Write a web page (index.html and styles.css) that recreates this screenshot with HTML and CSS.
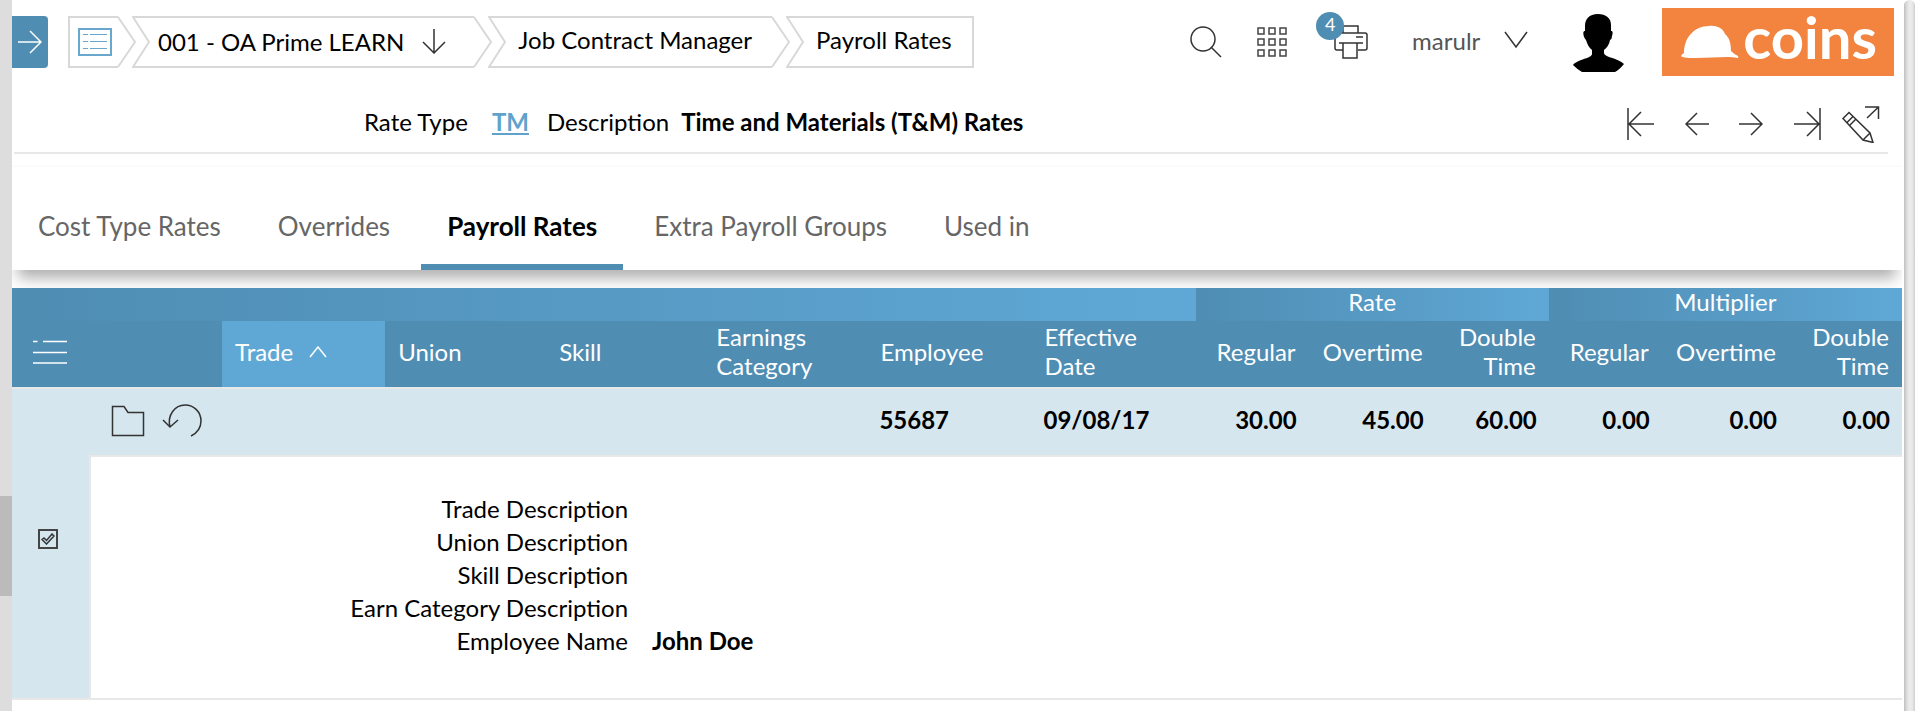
FILE: index.html
```html
<!DOCTYPE html>
<html lang="en">
<head>
<meta charset="utf-8">
<title>Payroll Rates</title>
<link rel="stylesheet" href="styles.css">
</head>
<body>
<div class="rail"><div class="rail-thumb"></div></div>
<div class="page">
  <header class="topbar">
    <button class="menu-toggle" aria-label="Open menu">
      <svg width="24" height="24" viewBox="0 0 24 24"><path d="M0 12H23M12 1L23 12L12 23"/></svg>
    </button>
    <nav aria-label="Breadcrumb">
      <ol class="crumbs">
        <li class="crumb">
          <a class="crumb-body crumb-first" href="#" aria-label="Menu list">
            <svg class="list-icon" width="34" height="28" viewBox="0 0 34 28"><path class="frame" d="M1 1H33V27H1Z"/><path d="M5 6.500H10M12 6.500H29M5 13.500H10M12 13.500H29M5 20.500H10M12 20.500H29"/></svg>
          </a>
          <svg class="edge" width="18" height="52" viewBox="0 0 18 52"><path d="M0 1L17 26L0 51"/></svg>
        </li>
        <li class="crumb">
          <svg class="edge" width="18" height="52" viewBox="0 0 18 52"><path d="M18 1H1L17 26L1 51H18"/></svg>
          <button class="crumb-body crumb-company">001 - OA Prime LEARN
            <svg class="line-icon" width="24" height="26" viewBox="0 0 24 26"><path d="M12 1V25M1 14L12 25L23 14"/></svg>
          </button>
          <svg class="edge" width="18" height="52" viewBox="0 0 18 52"><path d="M0 1L17 26L0 51"/></svg>
        </li>
        <li class="crumb">
          <svg class="edge" width="18" height="52" viewBox="0 0 18 52"><path d="M18 1H1L17 26L1 51H18"/></svg>
          <a class="crumb-body" href="#">Job Contract Manager</a>
          <svg class="edge" width="18" height="52" viewBox="0 0 18 52"><path d="M0 1L17 26L0 51"/></svg>
        </li>
        <li class="crumb">
          <svg class="edge" width="18" height="52" viewBox="0 0 18 52"><path d="M18 1H1L17 26L1 51H18"/></svg>
          <a class="crumb-body crumb-last" href="#">Payroll Rates</a>
        </li>
      </ol>
    </nav>
    <div class="tools">
      <button class="tool" aria-label="Search">
        <svg class="line-icon" width="32" height="32" viewBox="0 0 32 32"><circle cx="13" cy="13" r="12"/><path d="M21 21L31 31"/></svg>
      </button>
      <button class="tool" aria-label="Applications">
        <svg class="grid-icon" width="30" height="30" viewBox="0 0 30 30"><path d="M1 1h6v6h-6zM12 1h6v6h-6zM23 1h6v6h-6zM1 12h6v6h-6zM12 12h6v6h-6zM23 12h6v6h-6zM1 23h6v6h-6zM12 23h6v6h-6zM23 23h6v6h-6z"/></svg>
      </button>
      <button class="tool printer" aria-label="Print queue">
        <svg class="line-icon" width="34" height="34" viewBox="0 0 34 34"><path d="M9 8V1H24V8M9 25H3Q1 25 1 23V10Q1 8 3 8H31Q33 8 33 10V23Q33 25 31 25H24M5 18H29M9 18H23V33H9ZM22 12H29"/></svg>
        <span class="badge">4</span>
      </button>
      <button class="user">marulr
        <svg class="line-icon" width="24" height="18" viewBox="0 0 24 18"><path d="M1 1L12 16L23 1"/></svg>
      </button>
      <svg class="avatar" width="52" height="60" viewBox="0 0 52 60" role="img" aria-label="User picture"><path d="M26 1C17 1 13 6 13 13V18C11 18 11 20 12 24Q13 26 14 27Q16 34 20 37V41Q20 43 15 45C8 47 2 50 1 52Q6 57 10 59H43Q47 57 52 51C49 48 44 46 37 44Q32 42 32 40V37Q37 33 38 27Q40 26 40 23C41 20 41 18 39 18V12C39 5 34 1 26 1Z"/></svg>
      <a class="logo" href="#">
        <svg width="58" height="34" viewBox="0 0 58 34"><path d="M0 31Q1 29 3 28C3 13 13 1 28 1C37 0 42 4 44 9C49 13 50 20 50 26Q54 30 57 31Q58 33 56 33C48 31 31 33 14 33Q1 33 0 31Z"/></svg>
        <span>coins</span>
      </a>
    </div>
  </header>

  <section class="record">
    <dl class="record-fields">
      <dt>Rate Type</dt><dd><a href="#">TM</a></dd>
      <dt>Description</dt><dd>Time and Materials (T&amp;M) Rates</dd>
    </dl>
    <div class="record-nav">
      <button aria-label="First"><svg class="line-icon" width="28" height="32" viewBox="0 0 28 32"><path d="M1 0V32M27 16H2M14 4L2 16L14 28"/></svg></button>
      <button aria-label="Previous"><svg class="line-icon" width="24" height="32" viewBox="0 0 24 32"><path d="M24 16H1M12 5L1 16L12 27"/></svg></button>
      <button aria-label="Next"><svg class="line-icon" width="24" height="32" viewBox="0 0 24 32"><path d="M0 16H23M12 5L23 16L12 27"/></svg></button>
      <button aria-label="Last"><svg class="line-icon" width="28" height="32" viewBox="0 0 28 32"><path d="M27 0V32M1 16H26M14 4L26 16L14 28"/></svg></button>
      <button class="edit" aria-label="Edit"><svg class="line-icon" width="38" height="38" viewBox="0 0 38 38"><path d="M23 2H36.500V14M36.500 2L25 13M1 13.500L7 7.500L28 28L31 37.500L21 35ZM5 17.500L11 11.500M8 20L14 14M21 35L28 28"/></svg></button>
    </div>
  </section>

  <nav class="tabs" aria-label="Sections">
    <a class="tab" href="#">Cost Type Rates</a>
    <a class="tab" href="#">Overrides</a>
    <a class="tab active" href="#" aria-current="page">Payroll Rates</a>
    <a class="tab" href="#">Extra Payroll Groups</a>
    <a class="tab" href="#">Used in</a>
  </nav>

  <table class="rates">
    <colgroup>
      <col class="c-check"><col class="c-actions"><col class="c-trade"><col class="c-union"><col class="c-skill"><col class="c-text"><col class="c-text"><col class="c-text">
      <col class="c-num"><col class="c-wide"><col class="c-num"><col class="c-num"><col class="c-wide"><col class="c-num">
    </colgroup>
    <thead>
      <tr class="groups"><th colspan="8"></th><th colspan="3">Rate</th><th colspan="3">Multiplier</th></tr>
      <tr class="heads">
        <th class="list-cell"><button aria-label="List options"><svg width="34" height="24" viewBox="0 0 34 24"><path d="M0 1.500H4.500M10 1.500H34M0 12.500H34M0 23H34"/></svg></button></th>
        <th></th>
        <th class="sorted" aria-sort="ascending">Trade <svg width="18" height="12" viewBox="0 0 18 12"><path d="M1 11L9 1L17 11"/></svg></th>
        <th>Union</th><th>Skill</th><th>Earnings Category</th><th>Employee</th><th>Effective Date</th>
        <th class="num">Regular</th><th class="num">Overtime</th><th class="num">Double Time</th>
        <th class="num">Regular</th><th class="num">Overtime</th><th class="num">Double Time</th>
      </tr>
    </thead>
    <tbody>
      <tr class="entry">
        <td class="check-cell" rowspan="2">
          <label class="check"><input type="checkbox" checked aria-label="Select row"><svg width="14" height="12" viewBox="0 0 14 12"><path d="M1 6.500L3 5L5.500 7.500L11 1L13 3L5.500 11Z"/></svg></label>
        </td>
        <td class="actions-cell">
          <div class="actions">
            <button aria-label="Open"><svg class="line-icon" width="34" height="34" viewBox="0 0 34 34"><path d="M1.500 2.500H13L17 8.500H32.500V31.500H1.500Z"/></svg></button>
            <button aria-label="Undo"><svg class="line-icon" width="40" height="34" viewBox="0 0 40 34"><path d="M8 23C5 11 13 1 23 1C32 1 39 8 39 17C39 24 35 29 29 32M1 16L8 23L16 16"/></svg></button>
          </div>
        </td>
        <td></td><td></td><td></td><td></td><td>55687</td><td>09/08/17</td>
        <td class="num">30.00</td><td class="num">45.00</td><td class="num">60.00</td>
        <td class="num">0.00</td><td class="num">0.00</td><td class="num">0.00</td>
      </tr>
      <tr>
        <td class="detail" colspan="13">
          <dl class="detail-list">
            <dt>Trade Description</dt><dd></dd>
            <dt>Union Description</dt><dd></dd>
            <dt>Skill Description</dt><dd></dd>
            <dt>Earn Category Description</dt><dd></dd>
            <dt>Employee Name</dt><dd>John Doe</dd>
          </dl>
        </td>
      </tr>
    </tbody>
  </table>
</div>
<div class="scroll"></div>
</body>
</html>
```
FILE: styles.css
```css
* { box-sizing: border-box; }
body {
  margin: 0;
  min-height: 100vh;
  display: flex;
  background: #fff;
  color: #000;
  font: 24px/33px Lato, "Open Sans", sans-serif;
}
a { color: inherit; text-decoration: none; }
button { border: 0; padding: 0; margin: 0; background: none; font: inherit; color: inherit; cursor: pointer; }
svg { display: block; flex: none; fill: none; }
ol, dl, dd { margin: 0; padding: 0; }
.line-icon { stroke: #333; stroke-width: 1.5; }

.rail { flex: none; width: 12px; background: #ddd; padding-top: 496px; }
.rail-thumb { height: 100px; background: #bbb; }
.page { flex: 1; min-width: 0; }
.scroll {
  flex: none;
  width: 11px;
  margin-left: 2px;
  border-radius: 6px 6px 0 0;
  background: linear-gradient(90deg, #bfbfbf, #dcdcdc 25%, #ececec 50%, #e8e8e8 75%, #cfcfcf);
}

.topbar { display: flex; align-items: center; height: 84px; padding-right: 8px; }
.menu-toggle {
  display: grid;
  place-items: center;
  width: 36px;
  height: 52px;
  margin-right: 20px;
  border-radius: 0 4px 4px 0;
  background: #4f8db3;
}
.menu-toggle svg { stroke: #fff; stroke-width: 1.5; }
.crumbs { display: flex; list-style: none; }
.crumb { display: flex; height: 52px; }
.crumb + .crumb { margin-left: -4px; }
.crumb-body {
  display: flex;
  align-items: center;
  padding: 0 20px 6px 12px;
  border: solid #d8d8d8;
  border-width: 2px 0;
  white-space: nowrap;
}
.crumb-first { padding: 0 6px 0 8px; border-left-width: 2px; }
.crumb-company { gap: 18px; padding: 0 28px 2px 8px; }
.crumb-last { border-right-width: 2px; }
.edge { stroke: #d8d8d8; stroke-width: 2; }
.list-icon { stroke: #6aa7cd; stroke-width: 1; }
.list-icon .frame { stroke-width: 2; }

.tools { display: flex; align-items: center; margin-left: auto; }
.tool { margin-right: 35px; }
.grid-icon { stroke: #444; stroke-width: 1.5; }
.printer { position: relative; margin-left: 12px; margin-right: 44px; }
.badge {
  position: absolute;
  left: -18px;
  top: -13px;
  width: 28px;
  height: 28px;
  border-radius: 50%;
  background: #4f8db3;
  color: #fff;
  font-size: 18px;
  line-height: 25px;
}
.user { display: flex; align-items: center; gap: 24px; color: #555; padding-bottom: 4px; }
.avatar { margin: 2px 38px 0 44px; fill: #000; }
.logo {
  display: flex;
  align-items: center;
  gap: 4px;
  height: 68px;
  padding: 0 17px 0 19px;
  background: #f28440;
  color: #fff;
  font-size: 58px;
  font-weight: 700;
  line-height: 60px;
}
.logo svg { fill: #fff; }
.logo span { padding-bottom: 10px; }

.record {
  display: flex;
  align-items: center;
  justify-content: space-between;
  height: 70px;
  margin: 0 14px 13px 2px;
  padding: 8px 8px 0 350px;
  border-bottom: 2px solid #e8e8e8;
}
.record-fields { display: flex; padding-bottom: 2px; white-space: nowrap; }
.record-fields dt { margin-right: 12px; }
.record-fields dd { font-weight: 700; }
.record-fields dd a { color: #5fa3cc; text-decoration: underline; margin: 0 18px 0 12px; }
.record-nav { display: flex; align-items: center; gap: 30px; padding-top: 4px; }
.record-nav .edit { margin-left: -9px; }

.tabs {
  display: flex;
  gap: 5px;
  height: 103px;
  align-items: flex-end;
  font-size: 26px;
  box-shadow: 0 14px 14px -6px rgba(0, 0, 0, .32), 0 -1px 2px rgba(0, 0, 0, .03);
  clip-path: inset(-4px 0 -18px 0);
}
.tab {
  height: 70px;
  padding: 10px 26px 0;
  border-bottom: 6px solid transparent;
  color: #666;
  white-space: nowrap;
}
.tab.active { border-color: #4f8db3; color: #000; font-weight: 700; }

.rates {
  width: 100%;
  margin-top: 18px;
  table-layout: fixed;
  border-collapse: separate;
  border-spacing: 0;
}
.c-check { width: 77px; }
.c-actions { width: 133px; }
.c-trade { width: 163px; }
.c-union { width: 161px; }
.c-skill { width: 157px; }
.c-text { width: 164px; }
.c-num { width: 113px; }
.c-wide { width: 127px; }
.rates th { padding: 0 13px 6px; text-align: left; }
.rates td { padding: 0 12px 6px; text-align: left; }
.rates th.num { padding: 0 13px 6px 0; text-align: right; }
.rates td.num { padding: 0 12px 6px 0; text-align: right; }
.rates th { color: #fff; font-weight: 400; line-height: 29px; background: #4f8db3; }
.rates .groups th { height: 33px; line-height: 27px; text-align: center; background: linear-gradient(90deg, #4f8db3, #5fa8d6); }
.rates .heads th { height: 66px; }
.rates .heads .list-cell { padding: 0 0 0 21px; }
.list-cell svg, .sorted svg { stroke: #fff; stroke-width: 1.5; }
.rates .sorted { background: #5fa8d6; }
.sorted svg { display: inline-block; margin-left: 10px; vertical-align: 3px; }
.entry td {
  height: 70px;
  background: #d5e6ee;
  border: solid #e8e8e8;
  border-width: 2px 0;
  font-weight: 700;
}
.rates .actions-cell { padding: 0 0 2px 22px; }
.actions { display: flex; gap: 17px; }
.rates .check-cell { padding: 0 0 10px 26px; }
.check { display: grid; width: 20px; height: 20px; place-items: center; }
.check input, .check svg { grid-area: 1 / 1; }
.check input { appearance: none; width: 20px; height: 20px; margin: 0; border: 2px solid #444; }
.check svg { stroke: #333; stroke-width: 1.5; pointer-events: none; }
.rates .detail { padding: 35px 0 41px; border: solid #e8e8e8; border-width: 0 0 2px 2px; }
.detail-list { display: grid; grid-template-columns: 537px 1fr; column-gap: 24px; }
.detail-list dt { text-align: right; }
.detail-list dd { font-weight: 700; }
```
